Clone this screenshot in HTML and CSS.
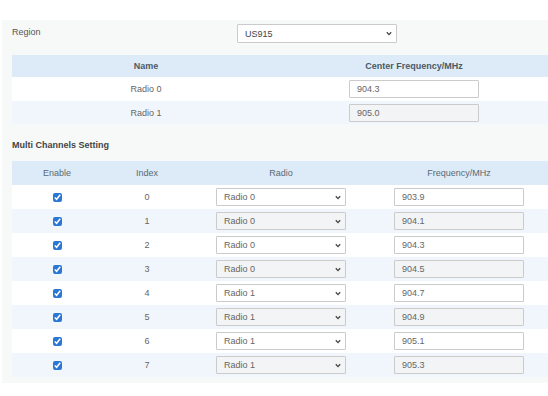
FILE: index.html
```html
<!DOCTYPE html>
<html lang="en">
<head>
    <meta charset="UTF-8">
    <meta name="viewport" content="width=device-width, initial-scale=1.0">
    <title>LoRa Channel Plan</title>
    <link rel="stylesheet" href="styles.css">
</head>
<body>
    <div class="panel">
        <div class="region-row">
            <label for="region">Region</label>
            <select id="region" class="region-select">
                <option>US915</option>
                <option>EU868</option>
                <option>AS923</option>
            </select>
        </div>

        <table class="grid radios">
            <tr>
                <th>Name</th>
                <th>Center Frequency/MHz</th>
            </tr>
            <tr>
                <td>Radio 0</td>
                <td><input type="text" value="904.3"></td>
            </tr>
            <tr>
                <td>Radio 1</td>
                <td><input type="text" value="905.0"></td>
            </tr>
        </table>

        <h4>Multi Channels Setting</h4>

        <table class="grid channels">
            <tr>
                <th class="col-s">Enable</th>
                <th class="col-s">Index</th>
                <th>Radio</th>
                <th>Frequency/MHz</th>
            </tr>
            <tr>
                <td><input type="checkbox" checked></td>
                <td>0</td>
                <td><select><option>Radio 0</option><option>Radio 1</option></select></td>
                <td><input type="text" value="903.9"></td>
            </tr>
            <tr>
                <td><input type="checkbox" checked></td>
                <td>1</td>
                <td><select><option>Radio 0</option><option>Radio 1</option></select></td>
                <td><input type="text" value="904.1"></td>
            </tr>
            <tr>
                <td><input type="checkbox" checked></td>
                <td>2</td>
                <td><select><option>Radio 0</option><option>Radio 1</option></select></td>
                <td><input type="text" value="904.3"></td>
            </tr>
            <tr>
                <td><input type="checkbox" checked></td>
                <td>3</td>
                <td><select><option>Radio 0</option><option>Radio 1</option></select></td>
                <td><input type="text" value="904.5"></td>
            </tr>
            <tr>
                <td><input type="checkbox" checked></td>
                <td>4</td>
                <td><select><option>Radio 0</option><option selected>Radio 1</option></select></td>
                <td><input type="text" value="904.7"></td>
            </tr>
            <tr>
                <td><input type="checkbox" checked></td>
                <td>5</td>
                <td><select><option>Radio 0</option><option selected>Radio 1</option></select></td>
                <td><input type="text" value="904.9"></td>
            </tr>
            <tr>
                <td><input type="checkbox" checked></td>
                <td>6</td>
                <td><select><option>Radio 0</option><option selected>Radio 1</option></select></td>
                <td><input type="text" value="905.1"></td>
            </tr>
            <tr>
                <td><input type="checkbox" checked></td>
                <td>7</td>
                <td><select><option>Radio 0</option><option selected>Radio 1</option></select></td>
                <td><input type="text" value="905.3"></td>
            </tr>
        </table>
    </div>
</body>
</html>
```

FILE: styles.css
```css
body {
    margin: 0;
    padding: 0;
    background: #fff;
    font-family: "Liberation Sans", Arial, sans-serif;
    font-size: 9px;
    color: #666;
}
.panel {
    margin-top: 20px;
    margin-left: 2px;
    padding: 4px 0 6px 10px;
    background: #f7f9f9;
}
.region-row {
    display: flex;
    align-items: center;
    height: 19px;
    margin-bottom: 12px;
}
.region-row label {
    width: 225px;
    color: #555;
    margin-top: -3px;
}
select, input[type="text"] {
    box-sizing: border-box;
    width: 130px;
    height: 18px;
    border: 1px solid #cbcbcb;
    border-radius: 1px;
    background-color: #fff;
    font-family: inherit;
    font-size: 9px;
    color: #666;
    padding: 0 0 0 7px;
    margin: 0;
    outline: none;
}
select {
    appearance: none;
    -webkit-appearance: none;
    background-image: url("data:image/svg+xml,%3Csvg xmlns='http://www.w3.org/2000/svg' width='6' height='5' viewBox='0 0 6 5'%3E%3Cpath d='M0.8 1.2 L3 3.6 L5.2 1.2' fill='none' stroke='%23444' stroke-width='1.3'/%3E%3C/svg%3E");
    background-repeat: no-repeat;
    background-position: right 4px center;
}
.region-select {
    width: 160px;
    height: 19px;
    color: #444;
}
.grid {
    width: 536px;
    border-collapse: collapse;
    table-layout: fixed;
}
.grid th {
    background: #dcebf7;
    color: #5a6a75;
    font-weight: normal;
    height: 23px;
    padding: 0;
}
.radios th {
    font-weight: bold;
    height: 22px;
    color: #4a5a66;
}
.grid td {
    text-align: center;
    height: 24px;
    padding: 0;
    background: #fff;
    vertical-align: middle;
}
.grid td > * {
    vertical-align: middle;
}
.grid tr:nth-child(odd) td {
    background: #f0f6fc;
}
.grid tr:nth-child(odd) td select,
.grid tr:nth-child(odd) td input[type="text"] {
    background-color: #f2f4f5;
}
.radios tr:last-child td {
    height: 23px;
}
.col-s {
    width: 90px;
}
h4 {
    margin: 16px 0 0 0;
    height: 21px;
    font-size: 9px;
    font-weight: bold;
    color: #444;
}
.channels th {
    height: 24px;
}
input[type="checkbox"] {
    width: 9px;
    height: 9px;
    margin: 0;
    accent-color: #2b78d4;
}
```
